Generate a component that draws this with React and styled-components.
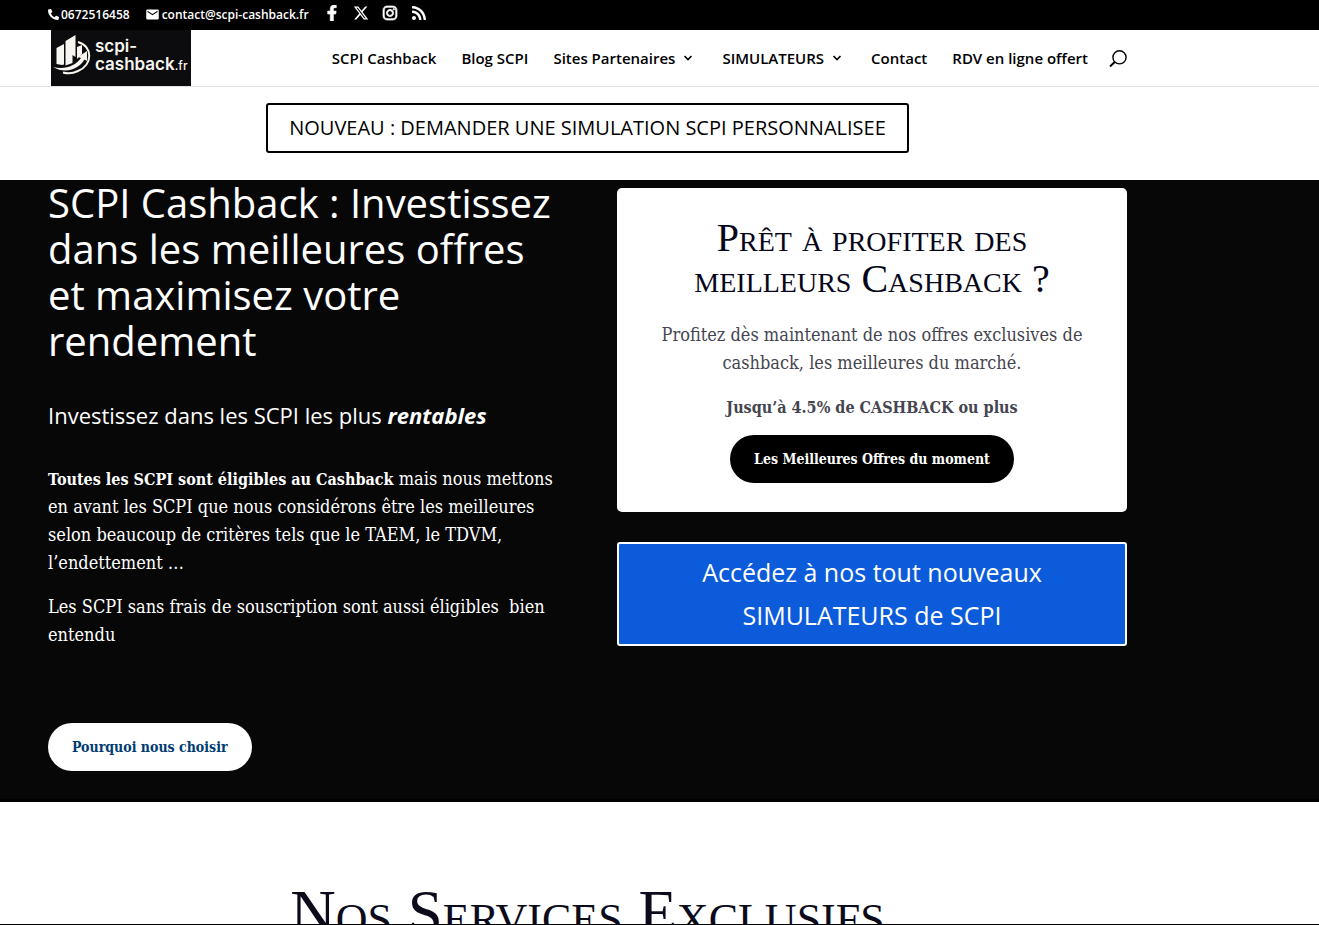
import React from "react";
import styled, { createGlobalStyle, css } from "styled-components";
import { FaFacebookF, FaInstagram, FaRss, FaPhoneAlt } from "react-icons/fa";
import { FaXTwitter } from "react-icons/fa6";
import { MdEmail } from "react-icons/md";

const sans = `"Open Sans", "Noto Sans", sans-serif`;
const slab = `"DejaVu Serif Condensed", "DejaVu Serif", serif`;
const roman = `"Liberation Serif", serif`;

const GlobalStyle = createGlobalStyle`
  * {
    box-sizing: border-box;
  }
  body {
    margin: 0;
    background: #fff;
    color: #000;
    font-family: ${sans};
  }
  h1, h2, h3, p {
    margin: 0;
    font-weight: 400;
  }
  a {
    color: inherit;
    text-decoration: none;
  }
`;

const Page = styled.div`
  height: 100vh;
  overflow: hidden;
  border-bottom: 1px solid #000;
`;

const Container = styled.div`
  max-width: 1079px;
  margin: 0 48px;
`;

const TopBar = styled.div`
  background: #000;
  color: #fff;
  font-size: 12px;
  font-weight: 600;
`;

const TopBarRow = styled(Container)`
  display: flex;
  align-items: center;
  height: 30px;
  padding-bottom: 2px;
`;

const ContactLink = styled.a`
  display: flex;
  align-items: center;
  gap: 2px;
  margin-right: 15px;
`;

const Socials = styled.div`
  display: flex;
  gap: 13px;
  padding-bottom: 2px;
  font-size: 16px;

  a {
    display: flex;
  }
`;

const Header = styled.header`
  border-bottom: 1px solid #e2e2e2;
`;

const HeaderRow = styled(Container)`
  display: flex;
  align-items: center;
  justify-content: space-between;
  height: 56px;
`;

const LogoLink = styled.a`
  display: flex;
  align-items: center;
  gap: 4px;
  width: 140px;
  height: 56px;
  margin-left: 3px;
  padding: 0 0 4px 2px;
  background: #0c0c0e;
  color: #f6f5f0;
  font-family: Inter, sans-serif;
  font-size: 17px;
  font-weight: 600;
  line-height: 18px;

  small {
    font-size: 12px;
    font-weight: 500;
  }
`;

const Nav = styled.nav`
  display: flex;
  align-items: center;
  gap: 25px;
  font-size: 15px;
  font-weight: 600;
`;

const NavLink = styled.a`
  display: flex;
  align-items: center;
  gap: 8px;
  white-space: nowrap;

  svg {
    margin-right: 4px;
  }
`;

const SearchButton = styled.button`
  display: flex;
  margin-left: -4px;
  padding: 0;
  border: none;
  background: none;
  cursor: pointer;
`;

const Promo = styled(Container)`
  display: flex;
  justify-content: center;
  padding: 16px 0 27px;
`;

const PromoButton = styled.a`
  padding: 6px 21px;
  border: 2px solid #000;
  border-radius: 3px;
  font-size: 20px;
  line-height: 34px;
`;

const Hero = styled.section`
  background: #070707;
  border-bottom: 3px solid #000;
  color: #fff;
`;

const HeroGrid = styled(Container)`
  display: grid;
  grid-template-columns: 1fr 1fr;
  gap: 59px;
  padding-bottom: 28px;
`;

const Title = styled.h1`
  font-size: 40px;
  line-height: 46px;
`;

const Subtitle = styled.h3`
  margin: 37px 0 36px;
  font-size: 22px;
  line-height: 28px;
`;

const Text = styled.p`
  font-family: ${slab};
  font-size: 18px;
  line-height: 28px;

  & + & {
    margin-top: 16px;
  }

  strong {
    font-size: 16px;
    line-height: 1;
  }
`;

const Pill = styled.a`
  display: block;
  width: fit-content;
  padding: 10px 24px;
  border-radius: 24px;
  font-family: ${slab};
  font-size: 14px;
  font-weight: 700;
  line-height: 28px;
  ${({ $dark }) =>
    $dark
      ? css`
          margin: 14px auto 0;
          background: #000;
          color: #fff;
        `
      : css`
          margin-top: 74px;
          background: #fff;
          color: #003c71;
        `}
`;

const Aside = styled.div`
  padding-top: 8px;
`;

const Card = styled.div`
  padding: 29px 32px;
  border-radius: 5px;
  background: #fff;
  color: #45454f;
  text-align: center;
`;

const CardTitle = styled.h2`
  margin-bottom: 22px;
  color: #05051a;
  font-family: ${roman};
  font-size: 40px;
  font-variant: small-caps;
  line-height: 41px;
`;

const SimulatorButton = styled.a`
  display: block;
  margin-top: 30px;
  padding: 7px 60px;
  border: 2px solid #fff;
  border-radius: 3px;
  background: #0c5bda;
  font-size: 25px;
  line-height: 43px;
  text-align: center;
`;

const Services = styled(Container)`
  padding-top: 78px;
`;

const ServicesTitle = styled.h2`
  color: #0b0b1c;
  font-family: ${roman};
  font-size: 63px;
  font-variant: small-caps;
  line-height: 66px;
  text-align: center;
`;

function LogoMark() {
  return (
    <svg width="38" height="52" viewBox="0 0 38 52" aria-hidden="true">
      <g fill="#f6f5f0">
        <path d="M3.5 18 L11 14 V34.5 L9 35 L3.5 34 Z" />
        <path d="M12.5 11 L22.5 5 V27 L19.5 25 V33 L12.5 35.5 Z" />
        <path d="M24 17 L29 15 V24 L24 29 Z" />
        <path d="M0 37 C12 40 22 36 28 28 L25 27 L34 21 L34 31 L31.5 29.5 C25 40 12 44 0 37 Z" />
      </g>
      <path
        d="M25 12 C40 16 40 35 25 41 C20 43.5 15 44 10 42.5"
        fill="none"
        stroke="#f6f5f0"
        strokeWidth="2"
      />
    </svg>
  );
}

function Chevron() {
  return (
    <svg width="10" height="6" viewBox="0 0 10 6" aria-hidden="true">
      <path d="M1.5 1 L5 4.5 L8.5 1" fill="none" stroke="#000" strokeWidth="1.6" />
    </svg>
  );
}

function SearchIcon() {
  return (
    <svg width="18" height="18" viewBox="0 0 18 18" aria-hidden="true">
      <circle cx="10.5" cy="8.3" r="6.6" fill="none" stroke="#000" strokeWidth="1.4" />
      <path d="M6 12.8 L1 17.5" stroke="#000" strokeWidth="2" />
    </svg>
  );
}

const links = [
  { label: "SCPI Cashback" },
  { label: "Blog SCPI" },
  { label: "Sites Partenaires", menu: true },
  { label: "SIMULATEURS", menu: true },
  { label: "Contact" },
  { label: "RDV en ligne offert" },
];

function App() {
  return (
    <Page>
      <GlobalStyle />
      <TopBar>
        <TopBarRow>
          <ContactLink href="tel:0672516458">
            <FaPhoneAlt size={11} />
            0672516458
          </ContactLink>
          <ContactLink href="mailto:contact@scpi-cashback.fr">
            <MdEmail size={15} />
            contact@scpi-cashback.fr
          </ContactLink>
          <Socials>
            <a href="#facebook" aria-label="Facebook">
              <FaFacebookF strokeWidth={20} />
            </a>
            <a href="#x" aria-label="X">
              <FaXTwitter />
            </a>
            <a href="#instagram" aria-label="Instagram">
              <FaInstagram strokeWidth={24} />
            </a>
            <a href="#rss" aria-label="RSS">
              <FaRss />
            </a>
          </Socials>
        </TopBarRow>
      </TopBar>

      <Header>
        <HeaderRow>
          <LogoLink href="/">
            <LogoMark />
            <span>
              scpi-
              <br />
              cashback<small>.fr</small>
            </span>
          </LogoLink>
          <Nav>
            {links.map(({ label, menu }) => (
              <NavLink href="#" key={label}>
                {label}
                {menu && <Chevron />}
              </NavLink>
            ))}
            <SearchButton type="button" aria-label="Rechercher">
              <SearchIcon />
            </SearchButton>
          </Nav>
        </HeaderRow>
      </Header>

      <Promo>
        <PromoButton href="#simulation">
          NOUVEAU : DEMANDER UNE SIMULATION SCPI PERSONNALISEE
        </PromoButton>
      </Promo>

      <Hero>
        <HeroGrid>
          <div>
            <Title>
              SCPI Cashback : Investissez dans les meilleures offres et maximisez votre rendement
            </Title>
            <Subtitle>
              Investissez dans les SCPI les plus{" "}
              <strong>
                <em>rentables</em>
              </strong>
            </Subtitle>
            <Text>
              <strong>Toutes les SCPI sont éligibles au Cashback</strong> mais nous mettons en avant
              les SCPI que nous considérons être les meilleures selon beaucoup de critères tels que
              le TAEM, le TDVM, l’endettement …
            </Text>
            <Text>Les SCPI sans frais de souscription sont aussi éligibles &nbsp;bien entendu</Text>
            <Pill href="#pourquoi">Pourquoi nous choisir</Pill>
          </div>
          <Aside>
            <Card>
              <CardTitle>Prêt à profiter des meilleurs Cashback ?</CardTitle>
              <Text>
                Profitez dès maintenant de nos offres exclusives de cashback, les meilleures du
                marché.
              </Text>
              <Text>
                <strong>Jusqu’à 4.5% de CASHBACK ou plus</strong>
              </Text>
              <Pill href="#offres" $dark>
                Les Meilleures Offres du moment
              </Pill>
            </Card>
            <SimulatorButton href="#simulateurs">
              Accédez à nos tout nouveaux SIMULATEURS de SCPI
            </SimulatorButton>
          </Aside>
        </HeroGrid>
      </Hero>

      <Services as="section">
        <ServicesTitle>Nos Services Exclusifs</ServicesTitle>
      </Services>
    </Page>
  );
}

export default App;
